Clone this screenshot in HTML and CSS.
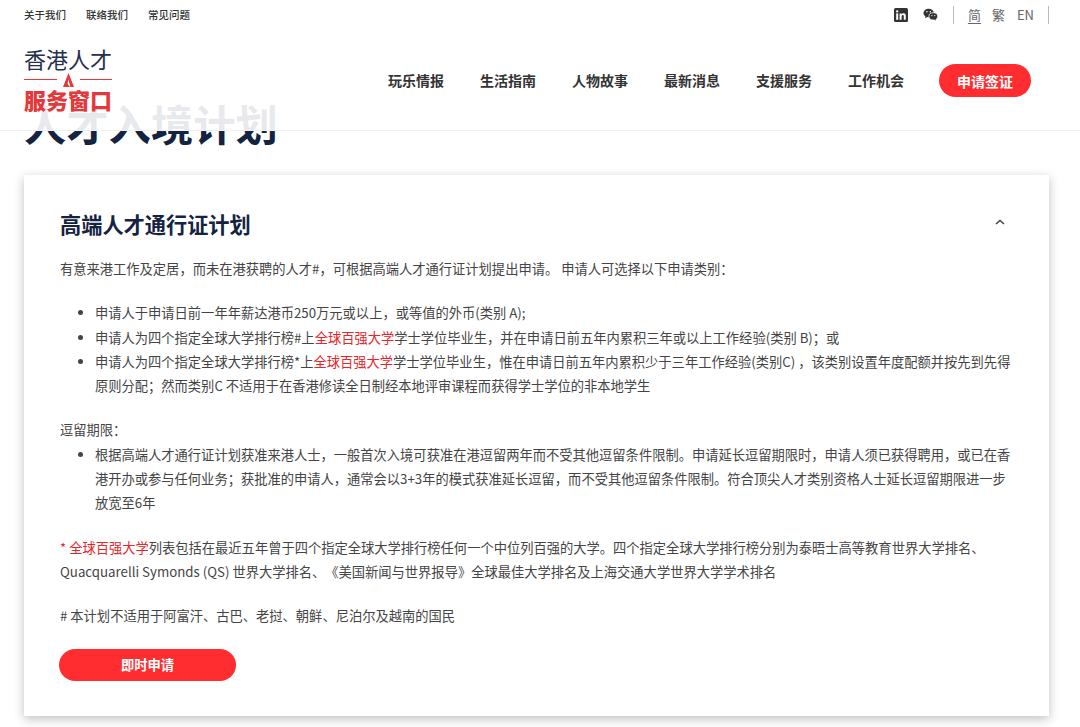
FILE: index.html

```html
<!DOCTYPE html>
<html lang="zh-CN">
<head>
  <meta charset="UTF-8" />
  <meta name="viewport" content="width=device-width, initial-scale=1.0" />
  <title>人才入境计划</title>
  <link rel="stylesheet" href="styles.css">
</head>
<body>
  <header class="site-header">
    <div class="top-bar">
      <nav class="top-links">
        <a>关于我们</a>
        <a>联络我们</a>
        <a>常见问题</a>
      </nav>
      <div class="top-tools">
        <svg class="icon" viewBox="0 0 14 14" width="14" height="14">
          <rect width="14" height="14" rx="1.5" fill="#333"/>
          <rect x="2.2" y="5.4" width="2" height="6.4" fill="#fff"/>
          <circle cx="3.2" cy="3.4" r="1.15" fill="#fff"/>
          <path d="M5.6 5.4h1.9v.9c.4-.6 1.1-1.05 2-1.05 1.7 0 2.3 1.05 2.3 2.7v3.85h-2V8.4c0-.8-.25-1.35-.95-1.35-.8 0-1.25.55-1.25 1.4v3.35h-2z" fill="#fff"/>
        </svg>
        <svg class="icon wechat" viewBox="0 0 16 14" width="15" height="13">
          <ellipse cx="6" cy="5.4" rx="5.6" ry="4.6" fill="#333"/>
          <path d="M2.6 8.6 2 11l2.6-1.4z" fill="#333"/>
          <ellipse cx="11" cy="9" rx="4.7" ry="3.9" fill="#333" stroke="#fff" stroke-width=".8"/>
          <path d="M13.2 11.8l.6 1.7-2.2-1.1z" fill="#333"/>
          <circle cx="4.1" cy="4" r=".8" fill="#fff"/>
          <circle cx="7.8" cy="4" r=".8" fill="#fff"/>
          <circle cx="9.5" cy="8.2" r=".65" fill="#fff"/>
          <circle cx="12.6" cy="8.2" r=".65" fill="#fff"/>
        </svg>
        <div class="lang">
          <a class="current">简</a>
          <a>繁</a>
          <a>EN</a>
        </div>
      </div>
    </div>
    <div class="main-bar">
      <a class="logo">
        <span class="logo-top">香港人才</span>
        <span class="logo-rule">
          <svg viewBox="0 0 11 14" width="11" height="14">
            <path d="M5.5 0 11 14H7.4L5.4 6.5 4.6 11 7 14H0z" fill="#e5383b"/>
          </svg>
        </span>
        <span class="logo-bottom">服务窗口</span>
      </a>
      <nav class="main-nav">
        <a>玩乐情报</a>
        <a>生活指南</a>
        <a>人物故事</a>
        <a>最新消息</a>
        <a>支援服务</a>
        <a>工作机会</a>
        <a class="btn btn-nav">申请签证</a>
      </nav>
    </div>
  </header>

  <main class="page">
    <h1>人才入境计划</h1>

    <section class="card">
      <div class="card-head">
        <h2>高端人才通行证计划</h2>
        <svg class="chevron" viewBox="0 0 10 6" width="10" height="6">
          <path d="M1 5 5 1.4 9 5" fill="none" stroke="#444" stroke-width="1.5"/>
        </svg>
      </div>

      <p>有意来港工作及定居，而未在港获聘的人才#，可根据高端人才通行证计划提出申请。 申请人可选择以下申请类别：</p>

      <ul>
        <li>申请人于申请日前一年年薪达港币250万元或以上，或等值的外币(类别 A);</li>
        <li>申请人为四个指定全球大学排行榜#上<span class="red">全球百强大学</span>学士学位毕业生，并在申请日前五年内累积三年或以上工作经验(类别 B)；或</li>
        <li>申请人为四个指定全球大学排行榜*上<span class="red">全球百强大学</span>学士学位毕业生，惟在申请日前五年内累积少于三年工作经验(类别C) ，该类别设置年度配额并按先到先得原则分配；然而类别C 不适用于在香港修读全日制经本地评审课程而获得学士学位的非本地学生</li>
      </ul>

      <p class="tight">逗留期限：</p>
      <ul>
        <li>根据高端人才通行证计划获准来港人士，一般首次入境可获准在港逗留两年而不受其他逗留条件限制。申请延长逗留期限时，申请人须已获得聘用，或已在香港开办或参与任何业务；获批准的申请人，通常会以3+3年的模式获准延长逗留，而不受其他逗留条件限制。符合顶尖人才类别资格人士延长逗留期限进一步放宽至6年</li>
      </ul>

      <p><span class="red">* 全球百强大学</span>列表包括在最近五年曾于四个指定全球大学排行榜任何一个中位列百强的大学。四个指定全球大学排行榜分别为泰晤士高等教育世界大学排名、Quacquarelli Symonds (QS) 世界大学排名、《美国新闻与世界报导》全球最佳大学排名及上海交通大学世界大学学术排名</p>

      <p># 本计划不适用于阿富汗、古巴、老挝、朝鲜、尼泊尔及越南的国民</p>

      <a class="btn btn-apply">即时申请</a>
    </section>
  </main>
</body>
</html>
```

FILE: styles.css

```css
* { box-sizing: border-box; }
html, body { margin: 0; padding: 0; }
body { font-family: "Noto Sans CJK SC", "Noto Sans", sans-serif; background: #fff; color: #444; height: 727px; overflow: hidden; text-spacing-trim: space-all; }

/* header lies over the page title */
.site-header { position: absolute; top: 0; left: 0; width: 100%; height: 131px; background: rgba(255, 255, 255, 0.9); border-bottom: 1px solid #f0f0f0; z-index: 5; }

.top-bar { display: flex; justify-content: space-between; align-items: center; height: 29px; padding: 0 31px 0 24px; }
.top-links { display: flex; gap: 20px; font-size: 10.5px; font-weight: 500; color: #333; }
.top-tools { display: flex; align-items: center; }
.icon { display: block; }
.wechat { margin-left: 15px; }
.lang { display: flex; gap: 12px; margin-left: 15px; padding: 0 14px; border-left: 1px solid #bbb; border-right: 1px solid #bbb; font-size: 13px; line-height: 18px; color: #666; }
.lang .current { margin-right: -1px; text-decoration: underline; text-underline-offset: 3px; }

.main-bar { display: flex; justify-content: space-between; align-items: center; height: 101px; padding: 0 49px 0 24px; }
.logo { display: flex; flex-direction: column; width: 88px; margin-top: -2px; }
.logo-top { font-size: 22px; line-height: 24px; margin-bottom: 2px; color: #25304d; white-space: nowrap; }
.logo-rule { display: flex; justify-content: center; align-items: center; height: 16px; background: linear-gradient(#e5383b, #e5383b) center / 100% 1px no-repeat; }
.logo-rule svg { background: #fff; padding: 0 6px; width: 23px; box-sizing: border-box; }
.logo-bottom { font-size: 22px; line-height: 26px; margin-top: -2px; font-weight: 900; color: #e5383b; white-space: nowrap; }

.main-nav { display: flex; align-items: center; gap: 36px; font-size: 14px; font-weight: 700; color: #333; }

.btn { display: flex; justify-content: center; align-items: center; background: #ff2d30; color: #fff; font-weight: 700; font-size: 14px; border-radius: 17px; }
.btn-nav { width: 92px; height: 33px; margin: 2px 0 0 -1px; }
.btn-apply { width: 177px; height: 32px; font-size: 13.3px; margin-top: 20px; margin-left: -1px; }

.page { padding: 97px 31px 0 24px; }
h1 { margin: 0; font-size: 42.3px; line-height: 52px; font-weight: 700; color: #14233f; }

.card { margin-top: 26px; height: 541px; padding: 34px 36px 0; background: #fff; box-shadow: 0 3px 10px rgba(0, 0, 0, 0.25); }
.card-head { display: flex; justify-content: space-between; align-items: center; padding-right: 8px; margin-bottom: 18px; }
.chevron { margin-bottom: 4px; }
h2 { margin: 0; font-size: 21.2px; line-height: 30px; font-weight: 700; color: #14233f; }

p, ul { margin: 0 0 20px; font-size: 13.28px; line-height: 24.3px; }
p.tight { margin-bottom: 0; }
ul { padding-left: 35px; }
.red { color: #e8262a; }
```
